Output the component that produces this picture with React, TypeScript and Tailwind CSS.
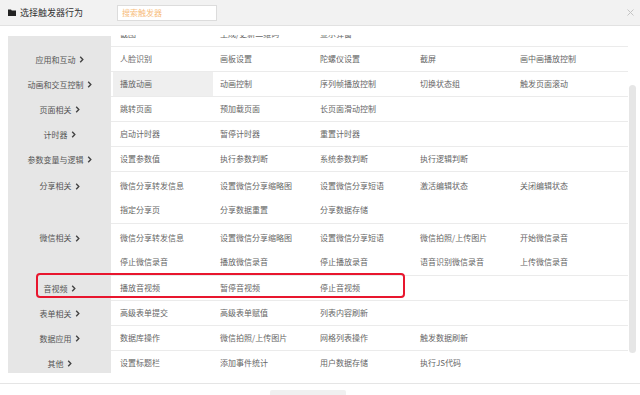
import React from "react";

type Group = { label: string; rows: string[][]; hl?: boolean };

const groups: Group[] = [
  { label: "应用和互动", rows: [["人脸识别", "画板设置", "陀螺仪设置", "截屏", "画中画播放控制"]] },
  { label: "动画和交互控制", rows: [["播放动画", "动画控制", "序列帧播放控制", "切换状态组", "触发页面滚动"]], hl: true },
  { label: "页面相关", rows: [["跳转页面", "预加载页面", "长页面滑动控制"]] },
  { label: "计时器", rows: [["启动计时器", "暂停计时器", "重置计时器"]] },
  { label: "参数变量与逻辑", rows: [["设置参数值", "执行参数判断", "系统参数判断", "执行逻辑判断"]] },
  {
    label: "分享相关",
    rows: [
      ["微信分享转发信息", "设置微信分享缩略图", "设置微信分享短语", "激活编辑状态", "关闭编辑状态"],
      ["指定分享页", "分享数据重置", "分享数据存储"],
    ],
  },
  {
    label: "微信相关",
    rows: [
      ["微信分享转发信息", "设置微信分享缩略图", "设置微信分享短语", "微信拍照/上传图片", "开始微信录音"],
      ["停止微信录音", "播放微信录音", "停止播放录音", "语音识别微信录音", "上传微信录音"],
    ],
  },
  { label: "音视频", rows: [["播放音视频", "暂停音视频", "停止音视频"]] },
  { label: "表单相关", rows: [["高级表单提交", "高级表单赋值", "列表内容刷新"]] },
  { label: "数据应用", rows: [["数据库操作", "微信拍照/上传图片", "网格列表操作", "触发数据刷新"]] },
  { label: "其他", rows: [["设置标题栏", "添加事件统计", "用户数据存储", "执行JS代码"]] },
];

const font = { fontFamily: '"Noto Sans CJK SC", "Noto Sans", sans-serif' };

function Chevron() {
  return (
    <svg width="5" height="7" viewBox="0 0 5 7" className="ml-[3px]">
      <path d="M1.2 0.8 L3.8 3.5 L1.2 6.2" fill="none" stroke="#444" strokeWidth="1.4" />
    </svg>
  );
}

function ItemRow({ items, h, hl }: { items: string[]; h: string; hl?: boolean }) {
  return (
    <div className={`flex pl-[2px] ${h}`}>
      {items.map((t, i) => (
        <div
          key={i}
          className={`w-[100px] flex items-center pl-[7px] text-[8px] text-[#666] whitespace-nowrap ${
            hl && i === 0 ? "bg-[#efefef]" : ""
          }`}
        >
          {t}
        </div>
      ))}
    </div>
  );
}

export default function App() {
  return (
    <div className="w-[640px] h-[395px] bg-white overflow-hidden relative" style={font}>
      {/* header */}
      <div className="h-[26px] bg-[#f2f2f2] border-b border-[#e2e2e2] flex items-center">
        <div className="w-[117px] flex items-center pl-[8px]">
          <svg width="8" height="7" viewBox="0 0 8 7">
            <path d="M0 0.5 H3 L3.8 1.5 H8 V7 H0 Z" fill="#222" />
          </svg>
          <span className="ml-[4px] text-[9px] text-[#333]">选择触发器行为</span>
        </div>
        <div className="w-[100px] h-[16px] bg-white border border-[#dcdcdc] flex items-center pl-[4px] text-[8px] text-[#f7bd7c]">
          搜索触发器
        </div>
        <div className="ml-auto pr-[6px] text-[#bbb]">
          <svg width="7" height="7" viewBox="0 0 7 7">
            <path d="M0.5 0.5 L6.5 6.5 M6.5 0.5 L0.5 6.5" stroke="#c4c4c4" strokeWidth="1" />
          </svg>
        </div>
      </div>

      {/* body */}
      <div className="pt-[9px] h-[357px]">
        <div className="flex h-[338px] overflow-hidden">
          <div className="w-[628px] pl-[8px] overflow-hidden">
            <div className="-mt-[13px]">
              {/* partially scrolled row */}
              <div className="flex h-[25px]">
                <div className="w-[103px] flex flex-col">
                  <div className="h-[14px]" />
                  <div className="flex-1 bg-[#e6e6e6]" />
                </div>
                <div className="flex-1 border-b border-[#ebebeb]">
                  <ItemRow items={["截图", "生成/更新二维码", "显示弹窗"]} h="h-[24px]" />
                </div>
              </div>
              {groups.map((g, gi) => {
                const multi = g.rows.length > 1;
                return (
                  <div key={gi} className="flex">
                    <div className={`w-[103px] bg-[#e6e6e6] ${multi ? "pt-[2px]" : ""}`}>
                      <div
                        className={`${multi ? "h-[24px]" : "h-[25px]"} flex items-center justify-center text-[8px] text-[#555]`}
                      >
                        <span>{g.label}</span>
                        <Chevron />
                      </div>
                    </div>
                    <div className={`flex-1 border-b border-[#ebebeb] ${multi ? "pt-[2px] pb-[1px]" : ""}`}>
                      {g.rows.map((r, ri) => (
                        <ItemRow key={ri} items={r} h="h-[24px]" hl={g.hl} />
                      ))}
                    </div>
                  </div>
                );
              })}
            </div>
          </div>
          <div className="w-[12px] pl-[1px]">
            <div className="mt-[50px] w-[7px] h-[268px] rounded-[4px] bg-[#e6e6e6]" />
          </div>
        </div>
      </div>

      {/* footer */}
      <div className="border-t border-[#e5e5e5] flex justify-center pt-[6px]">
        <div className="w-[76px] h-[24px] bg-[#f0f0f0] rounded-[2px] -ml-[24px]" />
      </div>

      {/* red annotation box */}
      <div className="absolute left-[36px] top-[273px] w-[369px] h-[25px] border-2 border-[#e8162e] rounded-[4px] pointer-events-none" />
    </div>
  );
}
